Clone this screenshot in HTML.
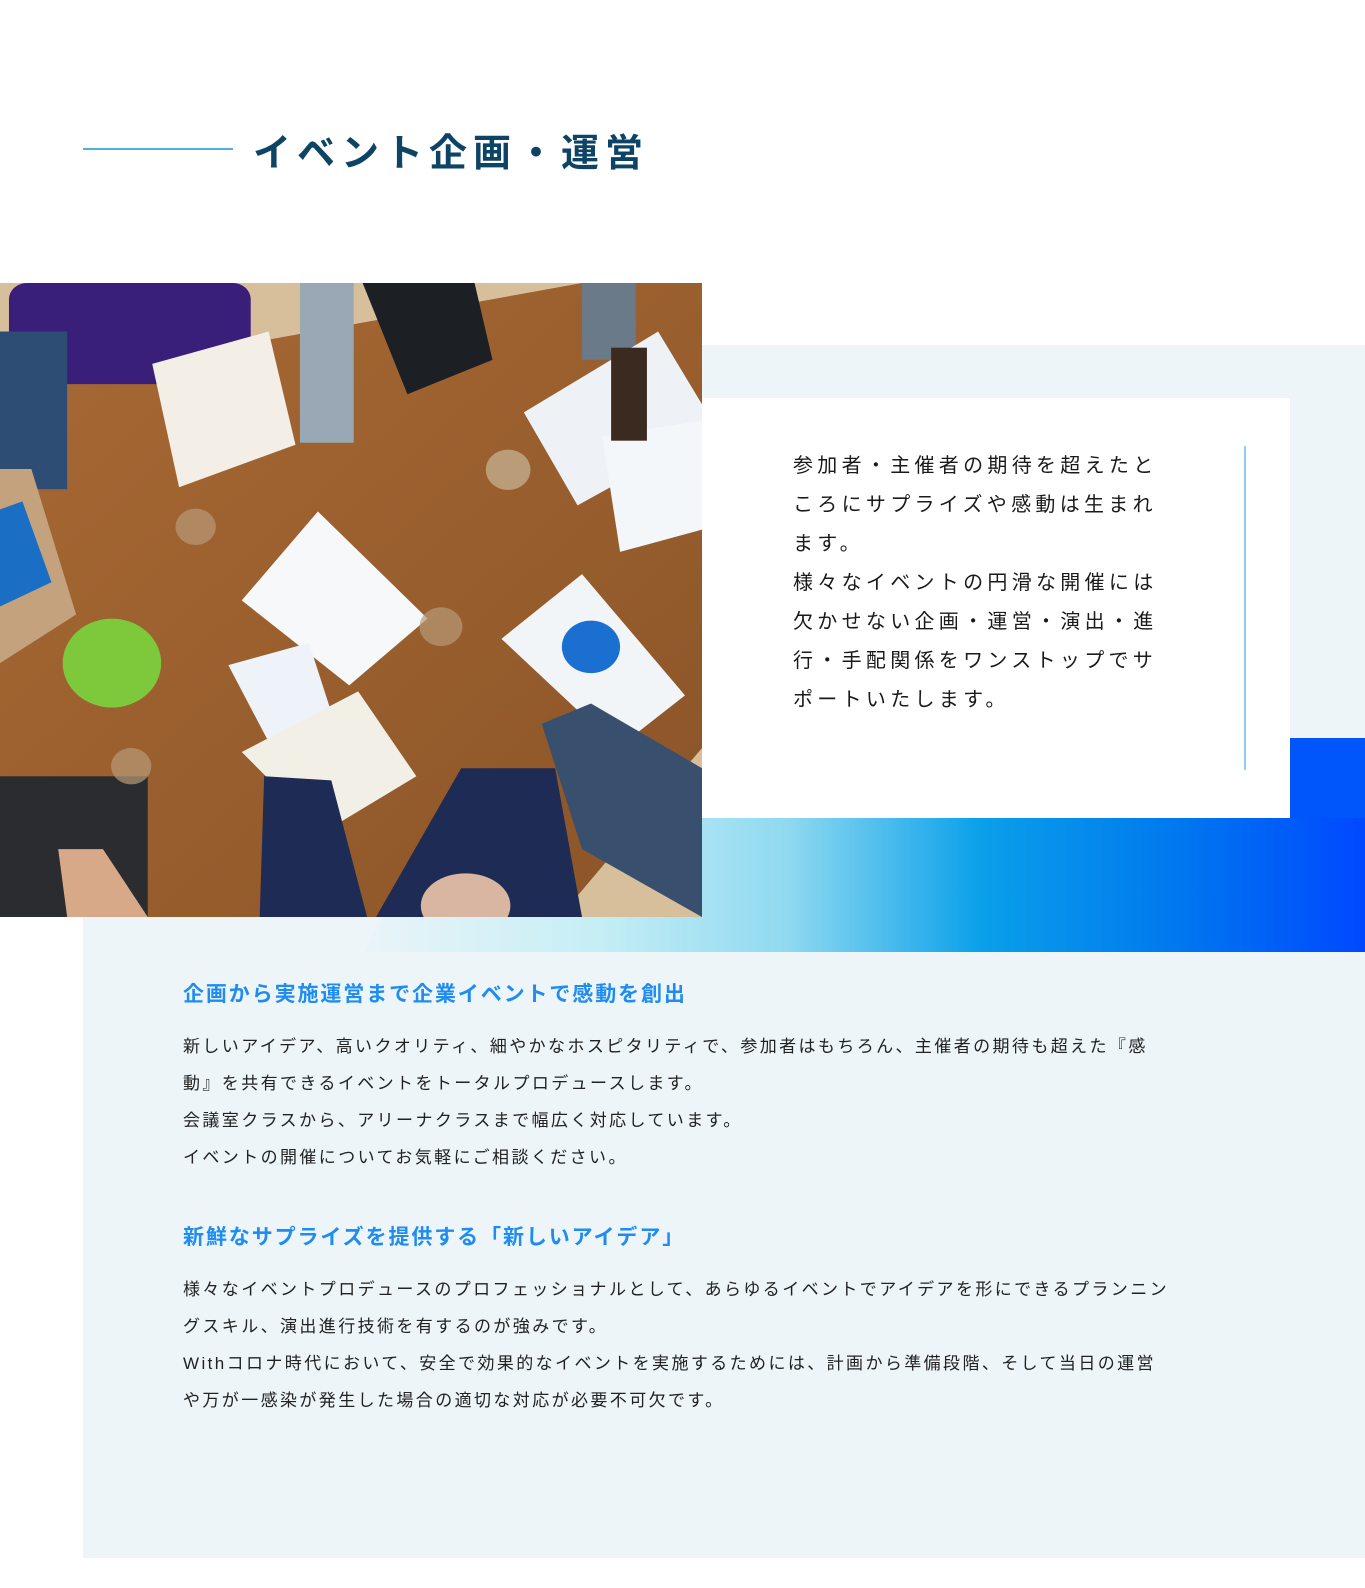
<!DOCTYPE html>
<html><head><meta charset="utf-8">
<style>
*{margin:0;padding:0;box-sizing:border-box}
html,body{width:1365px;height:1588px;background:#fff;overflow:hidden}
body{position:relative;font-family:"Liberation Sans","Noto Sans CJK JP",sans-serif;color:#1a1a1a}
.abs{position:absolute}
.title{left:253px;top:128px;font-size:38px;font-weight:bold;color:#0d4466;letter-spacing:6px;line-height:52px;white-space:nowrap}
.tline{left:83px;top:148px;width:150px;height:2px;background:#4fb0e0}
.bgR{left:702px;top:345px;width:663px;height:600px;background:#edf5f9}
.bgB{left:83px;top:917px;width:1282px;height:641px;background:#edf5f9}
.grad{left:83px;top:818px;width:1282px;height:134px;background:linear-gradient(90deg,rgba(237,245,249,0) 0%,rgba(237,245,249,0) 20%,#c6eef5 40%,#8fd9f0 55%,#0aa0ea 70%,#0079ee 85%,#0048ff 100%);clip-path:polygon(27% 0,100% 0,100% 100%,22% 100%)}
.blk{left:1290px;top:738px;width:75px;height:90px;background:#0056fb}
.card{left:702px;top:398px;width:588px;height:420px;background:#fff}
.vline{left:1244px;top:446px;width:2px;height:324px;background:#8dcff0}
.ctext{left:793px;top:447px;width:370px;font-size:20px;letter-spacing:4.3px;line-height:39px;color:#1a1a1a}
h3{position:absolute;left:183px;font-size:21px;font-weight:bold;color:#1e8cf0;letter-spacing:1.9px;white-space:nowrap}
.p{position:absolute;left:183px;width:992px;font-size:17px;letter-spacing:2.4px;line-height:37px;color:#222}
.photo{left:0;top:283px;width:702px;height:634px}
</style></head><body>
<div class="abs tline"></div>
<div class="abs title">イベント企画・運営</div>
<div class="abs bgR"></div>
<div class="abs bgB"></div>
<div class="abs blk"></div>
<div class="abs grad"></div>
<div class="abs card"></div>
<div class="abs vline"></div>
<div class="abs ctext">参加者・主催者の期待を超えたところにサプライズや感動は生まれます。<br>様々なイベントの円滑な開催には欠かせない企画・運営・演出・進行・手配関係をワンストップでサポートいたします。</div>
<svg class="abs photo" viewBox="0 0 1568 1568" preserveAspectRatio="none">
<defs><linearGradient id="w" x1="0" y1="0" x2="1" y2="1"><stop offset="0" stop-color="#a86a35"/><stop offset=".5" stop-color="#9a5f2e"/><stop offset="1" stop-color="#8a5428"/></linearGradient></defs>
<rect width="1568" height="1568" fill="#d8bf9c"/>
<polygon points="100,240 1300,0 1568,0 1568,1150 1250,1568 200,1568 0,1300 0,450" fill="url(#w)"/>
<rect x="20" y="0" width="540" height="250" fill="#3a1f7a" rx="40"/>
<polygon points="340,200 600,120 660,400 400,505" fill="#f3efe6"/>
<rect x="670" y="0" width="120" height="395" fill="#9aa7b5"/>
<polygon points="810,0 1060,0 1100,190 910,275" fill="#1c1f24"/>
<rect x="1300" y="0" width="120" height="190" fill="#6a7a88"/>
<polygon points="1170,320 1470,120 1568,300 1568,380 1290,550" fill="#eef2f6"/>
<polygon points="1345,380 1568,340 1568,610 1385,665" fill="#f4f7fa"/>
<rect x="1365" y="160" width="80" height="230" fill="#3b2a20"/>
<rect x="0" y="120" width="150" height="390" fill="#2e4d75"/>
<polygon points="0,460 70,460 170,820 0,940" fill="#c4a27e"/>
<polygon points="0,560 50,540 115,740 0,800" fill="#1a6fc4"/>
<polygon points="540,785 710,565 955,830 780,995" fill="#f6f8fa"/>
<polygon points="510,945 690,890 760,1130 600,1135" fill="#eef3fa"/>
<polygon points="540,1160 800,1010 930,1220 720,1360" fill="#f2efe7"/>
<polygon points="1120,880 1300,720 1530,1020 1380,1150" fill="#f2f5f8"/>
<circle cx="1320" cy="900" r="65" fill="#1a6fd0"/>
<circle cx="250" cy="940" r="110" fill="#7ec83c"/>
<rect x="0" y="1220" width="330" height="348" fill="#2a2c30"/>
<polygon points="130,1400 230,1400 330,1568 150,1568" fill="#d8a989"/>
<polygon points="590,1220 740,1230 820,1568 580,1568" fill="#1e2c55"/>
<polygon points="1030,1200 1240,1200 1300,1568 840,1568" fill="#1e2c55"/>
<ellipse cx="1040" cy="1540" rx="100" ry="80" fill="#d9b6a2"/>
<polygon points="1210,1090 1320,1040 1568,1200 1568,1568 1300,1400" fill="#38506e"/>
<circle cx="1135" cy="462" r="50" fill="#c9b79a" opacity=".7"/>
<circle cx="437" cy="603" r="45" fill="#b89a78" opacity=".7"/>
<circle cx="985" cy="850" r="48" fill="#b89a78" opacity=".7"/>
<circle cx="293" cy="1195" r="45" fill="#b89a78" opacity=".7"/>
</svg>
<h3 style="top:978px">企画から実施運営まで企業イベントで感動を創出</h3>
<div class="p" style="top:1028px">新しいアイデア、高いクオリティ、細やかなホスピタリティで、参加者はもちろん、主催者の期待も超えた『感<br>動』を共有できるイベントをトータルプロデュースします。<br>会議室クラスから、アリーナクラスまで幅広く対応しています。<br>イベントの開催についてお気軽にご相談ください。</div>
<h3 style="top:1221px">新鮮なサプライズを提供する「新しいアイデア」</h3>
<div class="p" style="top:1271px">様々なイベントプロデュースのプロフェッショナルとして、あらゆるイベントでアイデアを形にできるプランニン<br>グスキル、演出進行技術を有するのが強みです。<br>Withコロナ時代において、安全で効果的なイベントを実施するためには、計画から準備段階、そして当日の運営<br>や万が一感染が発生した場合の適切な対応が必要不可欠です。</div>
</body></html>
